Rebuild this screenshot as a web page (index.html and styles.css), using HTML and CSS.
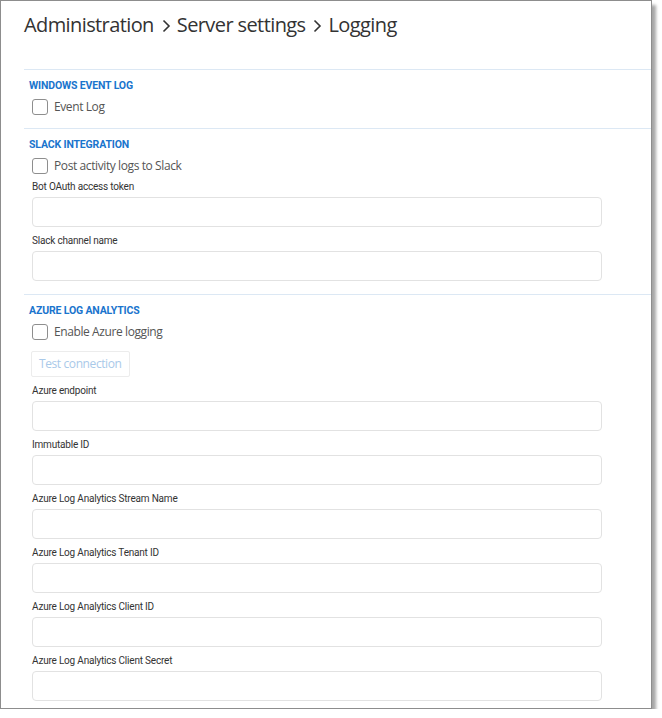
FILE: index.html
```html
<!DOCTYPE html>
<html>
<head>
<meta charset="utf-8">
<link rel="stylesheet" href="styles.css">
</head>
<body>
<div class="frame">
  <h1 class="crumbs">
    <span>Administration</span>
    <svg class="chev" width="9" height="14" viewBox="0 0 9 14"><path d="M1.5 1.5 L7 7 L1.5 12.5" fill="none" stroke="#333" stroke-width="1.6"/></svg>
    <span>Server settings</span>
    <svg class="chev" width="9" height="14" viewBox="0 0 9 14"><path d="M1.5 1.5 L7 7 L1.5 12.5" fill="none" stroke="#333" stroke-width="1.6"/></svg>
    <span>Logging</span>
  </h1>

  <section class="section">
    <h2 class="section-title">WINDOWS EVENT LOG</h2>
    <label class="check"><span class="box"></span><span>Event Log</span></label>
  </section>

  <section class="section">
    <h2 class="section-title">SLACK INTEGRATION</h2>
    <label class="check"><span class="box"></span><span>Post activity logs to Slack</span></label>
    <div class="fields">
      <div class="field"><div class="field-label">Bot OAuth access token</div><div class="input"></div></div>
      <div class="field"><div class="field-label">Slack channel name</div><div class="input"></div></div>
    </div>
  </section>

  <section class="section last">
    <h2 class="section-title">AZURE LOG ANALYTICS</h2>
    <label class="check"><span class="box"></span><span>Enable Azure logging</span></label>
    <div class="btn">Test connection</div>
    <div class="fields">
      <div class="field"><div class="field-label">Azure endpoint</div><div class="input"></div></div>
      <div class="field"><div class="field-label">Immutable ID</div><div class="input"></div></div>
      <div class="field"><div class="field-label">Azure Log Analytics Stream Name</div><div class="input"></div></div>
      <div class="field"><div class="field-label">Azure Log Analytics Tenant ID</div><div class="input"></div></div>
      <div class="field"><div class="field-label">Azure Log Analytics Client ID</div><div class="input"></div></div>
      <div class="field"><div class="field-label">Azure Log Analytics Client Secret</div><div class="input"></div></div>
    </div>
  </section>
</div>
</body>
</html>
```
FILE: styles.css
```css
html, body {
  margin: 0;
  padding: 0;
  background: #fff;
}
.frame {
  box-sizing: border-box;
  width: 652px;
  height: 709px;
  border: 1px solid #8d8d8d;
  box-shadow: 4px 5px 3px rgba(0,0,0,0.35);
  background: #fff;
  overflow: hidden;
  padding-left: 23px;
}
.crumbs {
  margin: 10px 0 30px;
  height: 28px;
  display: flex;
  align-items: center;
  font-family: "Open Sans", sans-serif;
  font-weight: 400;
  font-size: 20px;
  line-height: 28px;
  color: #333;
  letter-spacing: -0.6px;
}
.crumbs .chev {
  margin: 2px 6px 0 8px;
}
.section {
  border-top: 1px solid #dce8f4;
  padding: 9px 0 13px 5px;
  display: flex;
  flex-direction: column;
  align-items: flex-start;
}
.section.last { padding-bottom: 0; }
.section-title {
  margin: 0;
  font-family: Roboto, sans-serif;
  font-weight: 700;
  font-size: 10.5px;
  line-height: 14px;
  letter-spacing: -0.15px;
  color: #1a74cd;
}
.check {
  margin-top: 6px;
  margin-left: 3px;
  display: flex;
  align-items: center;
  gap: 6px;
  font-family: "Open Sans", sans-serif;
  font-size: 12px;
  line-height: 16px;
  letter-spacing: -0.4px;
  color: #555;
}
.box {
  box-sizing: border-box;
  width: 16px;
  height: 16px;
  border: 1.5px solid #8e8e8e;
  border-radius: 3px;
}
.btn {
  box-sizing: border-box;
  margin-top: 11px;
  margin-left: 2px;
  height: 26px;
  padding: 0 7px;
  border: 1px solid #ececec;
  border-radius: 2px;
  font-family: "Open Sans", sans-serif;
  font-size: 12px;
  line-height: 24px;
  letter-spacing: -0.4px;
  color: #a9c9e9;
}
.fields {
  margin-top: 7px;
  margin-left: 3px;
  display: flex;
  flex-direction: column;
  gap: 7px;
}
.field-label {
  font-family: Roboto, sans-serif;
  font-size: 10px;
  line-height: 14px;
  letter-spacing: -0.2px;
  color: #333;
  margin-bottom: 3px;
}
.input {
  box-sizing: border-box;
  width: 570px;
  height: 30px;
  border: 1px solid #e2e2e2;
  border-radius: 4px;
  background: #fff;
}
.section:nth-of-type(2) .fields { margin-top: 6px; }
```
